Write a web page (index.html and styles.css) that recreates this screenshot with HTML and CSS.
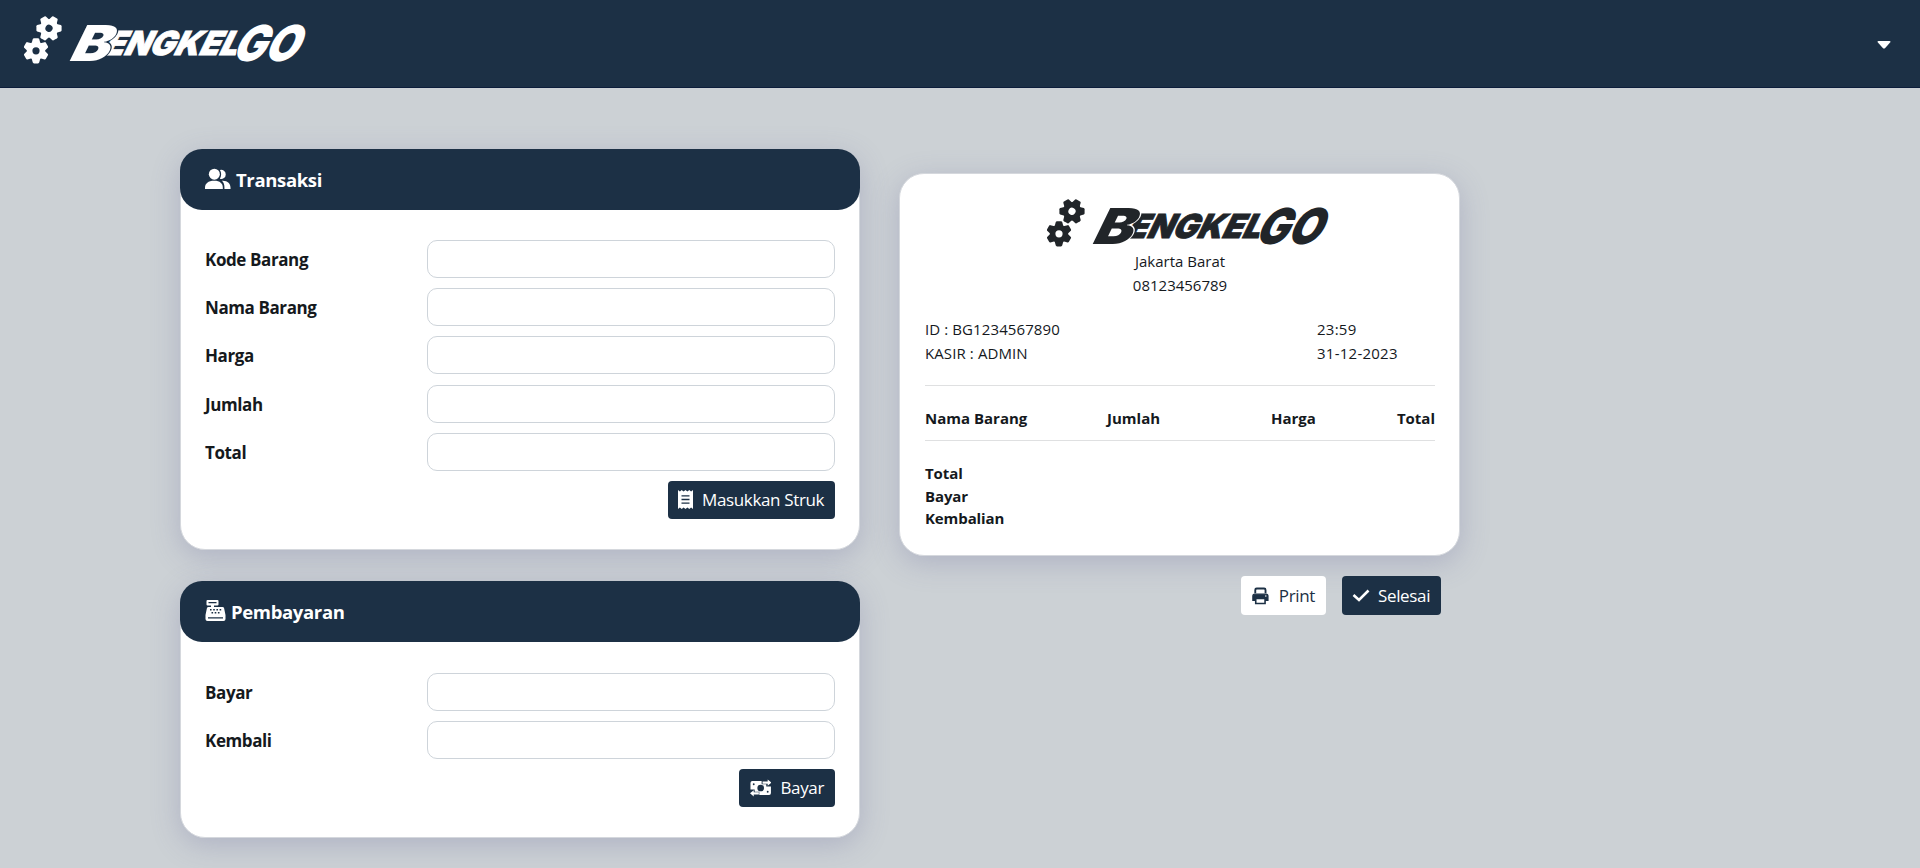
FILE: index.html
```html
<!DOCTYPE html>
<html lang="id">
<head>
<meta charset="utf-8">
<title>BengkelGO</title>
<link rel="stylesheet" href="styles.css">
</head>
<body>
<svg class="defs" width="0" height="0" aria-hidden="true">
  <defs>
    <g id="gear">
      <circle r="6.4" fill="none" stroke="currentColor" stroke-width="5.6"/>
      <g id="teeth" fill="currentColor">
        <path id="tooth" d="M-4.4-7.5-3.2-11.8Q-2.9-12.6-2-12.6H2Q2.9-12.6 3.2-11.8L4.4-7.5Z"/>
        <use href="#tooth" transform="rotate(60)"/>
        <use href="#tooth" transform="rotate(120)"/>
        <use href="#tooth" transform="rotate(180)"/>
        <use href="#tooth" transform="rotate(240)"/>
        <use href="#tooth" transform="rotate(300)"/>
      </g>
    </g>
    <symbol id="logo" viewBox="24 14 284 52">
      <use href="#gear" transform="translate(49 28.300) rotate(30)"/>
      <use href="#gear" transform="translate(36 50.800)"/>
      <g class="wordmark">
        <text class="small" transform="translate(102 55) skewX(-26)" font-size="33" textLength="134" lengthAdjust="spacingAndGlyphs">ENGKEL</text>
        <text transform="translate(67 61) skewX(-26)" font-size="49.5" textLength="39" lengthAdjust="spacingAndGlyphs">B</text>
        <text transform="translate(230 61) skewX(-26)" font-size="49.5" textLength="65" lengthAdjust="spacingAndGlyphs">GO</text>
      </g>
    </symbol>
  </defs>
</svg>

<header class="navbar">
  <svg class="logo"><use href="#logo"/></svg>
  <svg class="caret" viewBox="0 0 14 8"><path d="M1.5 0h11q1.6.3.6 1.6L8.2 7Q7 8.200 5.800 7L.9 1.600Q-.1.300 1.500 0Z" fill="currentColor"/></svg>
</header>

<main class="page">
  <div class="forms">
    <section class="card">
      <h2 class="card-title">
        <svg width="26" height="22" viewBox="0 0 27 22" fill="currentColor"><circle cx="9.700" cy="6" r="5.700"/><path d="M0 21.500v-1.500c0-4.500 3.300-7.300 9.500-7.300s9 2.800 9 7.300v1.500Z"/><path d="M15.500 1.700a4.700 4.700 0 1 1 0 9c1.700-2.700 1.700-6.500 0-9ZM18.500 12.900c5.200.2 8 3 8 7.100v1.500h-6.300V20c0-3-.7-5.400-2.700-7.100Z"/></svg>
        <span>Transaksi</span>
      </h2>
      <div class="card-body">
        <label class="row"><span class="label">Kode Barang</span><input class="field" type="text"></label>
        <label class="row"><span class="label">Nama Barang</span><input class="field" type="text"></label>
        <label class="row"><span class="label">Harga</span><input class="field" type="text"></label>
        <label class="row"><span class="label">Jumlah</span><input class="field" type="text"></label>
        <label class="row"><span class="label">Total</span><input class="field" type="text"></label>
        <button class="btn btn-struk" type="button">
          <svg width="15" height="19" viewBox="0 0 15 19"><path d="M0 0 1.900 1.500 3.700 0 5.600 1.500 7.500 0 9.400 1.500 11.300 0 13.100 1.500 15 0V19L13.100 17.500 11.300 19 9.400 17.500 7.500 19 5.600 17.500 3.700 19 1.900 17.500 0 19Z" fill="#fff"/><path d="M3.500 5.800h8M3.500 9.500h8M3.500 13.200h8" stroke="#1c3045" stroke-width="1.300"/></svg>
          <span>Masukkan Struk</span>
        </button>
      </div>
    </section>

    <section class="card">
      <h2 class="card-title">
        <svg width="21" height="21" viewBox="0 0 21 21"><path d="M2.500 0h10q1 0 1 1v3.500q0 1-1 1H9V7h8.500q1.300 0 1.600 1.300L20.500 15v4q0 2-2 2h-16q-2 0-2-2v-4L1.900 8.300Q2.200 7 3.500 7H6V5.500H2.500q-1 0-1-1V1q0-1 1-1Z" fill="#fff"/><path d="M3.500 2.700h8M3 17.800h15" stroke="#1c3045" stroke-width="1.300"/><path d="M5 9.700h12M6.500 12.700h9" stroke="#1c3045" stroke-width="1.600" stroke-dasharray="1.600 1.600"/></svg>
        <span>Pembayaran</span>
      </h2>
      <div class="card-body payment">
        <label class="row"><span class="label">Bayar</span><input class="field" type="text"></label>
        <label class="row"><span class="label">Kembali</span><input class="field" type="text"></label>
        <button class="btn btn-bayar" type="button">
          <svg width="23" height="18" viewBox="0 0 23 18"><path d="M2.500 1.500h10V5h5v2.500h5v7q0 2-2 2H10V13H5v-2.500H.5v-7q0-2 2-2Z" fill="#fff"/><circle cx="11.500" cy="9" r="3.600" fill="#1c3045"/><circle cx="4" cy="5" r="1" fill="#1c3045"/><circle cx="19" cy="13" r="1" fill="#1c3045"/><path d="M13.500 2h5.500V0l4 3.300-4 3.300V4.500h-5.500ZM9.500 13.500H4v-2L0 14.700 4 18v-2h5.500Z" fill="#fff"/></svg>
          <span>Bayar</span>
        </button>
      </div>
    </section>
  </div>

  <div class="receipt-col">
    <section class="card receipt">
      <div class="receipt-head">
        <svg class="logo"><use href="#logo"/></svg>
        <div>Jakarta Barat</div>
        <div>08123456789</div>
      </div>
      <div class="meta">
        <div><div>ID : BG1234567890</div><div>KASIR : ADMIN</div></div>
        <div class="when"><div>23:59</div><div>31-12-2023</div></div>
      </div>
      <div class="items-head"><span>Nama Barang</span><span>Jumlah</span><span>Harga</span><span>Total</span></div>
      <div class="totals"><div>Total</div><div>Bayar</div><div>Kembalian</div></div>
    </section>
    <div class="actions">
      <button class="btn btn-print" type="button">
        <svg width="18" height="18" viewBox="0 0 18 18" fill="none" stroke="#1c3045" stroke-width="2"><path d="M3.500 6V2.500q0-1.500 1.500-1.500h8q1.500 0 1.500 1.500V6"/><path d="M3 13.500H1V9q0-2 2-2h12q2 0 2 2v4.500h-2Z" fill="#1c3045" stroke-width="1.500"/><path d="M4 11.500h10V17H4Z" fill="#fff" stroke-width="1.700"/><circle cx="14.800" cy="9" r=".8" fill="#fff" stroke="none"/></svg>
        <span>Print</span>
      </button>
      <button class="btn btn-selesai" type="button">
        <svg width="18" height="13" viewBox="0 0 18 13"><path d="M1.500 6 7 11 16.500 1.500" fill="none" stroke="#fff" stroke-width="2.600"/></svg>
        <span>Selesai</span>
      </button>
    </div>
  </div>
</main>
</body>
</html>
```
FILE: styles.css
```css
* { box-sizing: border-box; }

body {
  margin: 0;
  min-height: 868px;
  overflow: hidden;
  background: #ccd1d5;
  color: #15191d;
  font-family: "Open Sans", "Noto Sans", sans-serif;
  font-size: 15px;
  line-height: 24px;
}

.defs { display: block; }

.navbar {
  --outline: #1c3045;
  display: flex;
  justify-content: space-between;
  height: 88px;
  padding: 14px 29px 0 24px;
  background: #1c3045;
  border-bottom: 1px solid #0c1d3b;
  color: #fff;
}

.logo { display: block; width: 284px; height: 52px; overflow: visible; }

.wordmark {
  font-family: Inter, Roboto, sans-serif;
  font-weight: 900;
  fill: currentColor;
  stroke: var(--outline);
  stroke-width: 2px;
  paint-order: stroke;
}

.wordmark .small { stroke: currentColor; stroke-width: .8px; }

.caret { width: 14px; height: 8px; margin-top: 27px; }

.page {
  display: flex;
  gap: 40px;
  padding: 61px 0 0 180px;
}

.forms {
  display: flex;
  flex-direction: column;
  gap: 31px;
  width: 680px;
}

.card {
  background: #fff;
  border: 1px solid #d5d8dd;
  border-radius: 25px;
  box-shadow: 0 7px 29px rgba(100, 100, 150, .28);
}

.card-title {
  display: flex;
  align-items: center;
  gap: 5px;
  height: 61px;
  margin: -1px -1px 0;
  padding: 0 25px 1px;
  border-radius: 22px;
  background: #1c3045;
  color: #fff;
  font-size: 18.5px;
  font-weight: 700;
  letter-spacing: -.35px;
}

.card-title span { padding-top: 2px; }

.card-body {
  display: flex;
  flex-direction: column;
  gap: 10.2px;
  padding: 30px 24px;
}

.payment { padding-top: 31px; }

.row { display: flex; align-items: center; height: 38px; }
.row .label { width: 222px; padding-top: 2px; font-size: 17px; font-weight: 700; letter-spacing: -.4px; }

.field {
  width: 408px;
  height: 38px;
  border: 1px solid #ced4da;
  border-radius: 10px;
  background: #fff;
}

.btn {
  display: flex;
  align-items: center;
  height: 38px;
  border: 0;
  border-radius: 4px;
  background: #1c3045;
  color: #fff;
  font: 17px/24px "Open Sans", "Noto Sans", sans-serif;
  letter-spacing: -.35px;
  white-space: nowrap;
}

.card-body .btn { align-self: flex-end; }
.btn-struk { width: 167px; padding: 0 10px; gap: 9px; }
.btn-bayar { width: 96px; padding: 0 11px; gap: 9px; }

.receipt-col { width: 561px; margin-left: -1px; padding-top: 24px; }

.receipt {
  --outline: #fff;
  height: 383px;
  padding: 23px 24px 0 25px;
}

.receipt-head { text-align: center; }
.receipt-head .logo { margin: 0 auto; position: relative; left: 9px; color: #212529; }

.meta { display: flex; margin-top: 20px; padding-bottom: 20px; border-bottom: 1px solid #dfe0e1; letter-spacing: .1px; }
.meta > div { width: 392px; }
.meta .when { width: auto; letter-spacing: .25px; }

.items-head {
  display: grid;
  grid-template-columns: 182px 164px 1fr auto;
  padding: 20px 0 10px;
  border-bottom: 1px solid #dfe0e1;
  font-weight: 700;
}

.totals { padding-top: 21px; font-weight: 700; line-height: 22.5px; letter-spacing: -.1px; }

.actions { display: flex; justify-content: flex-end; gap: 16px; margin-top: 20px; padding-right: 19px; }
.actions .btn { height: 39px; }
.btn-print { width: 85px; padding: 0 11px; gap: 10px; background: #fff; color: #1c3045; }
.btn-selesai { width: 99px; padding: 0 10px; gap: 8px; }
```
